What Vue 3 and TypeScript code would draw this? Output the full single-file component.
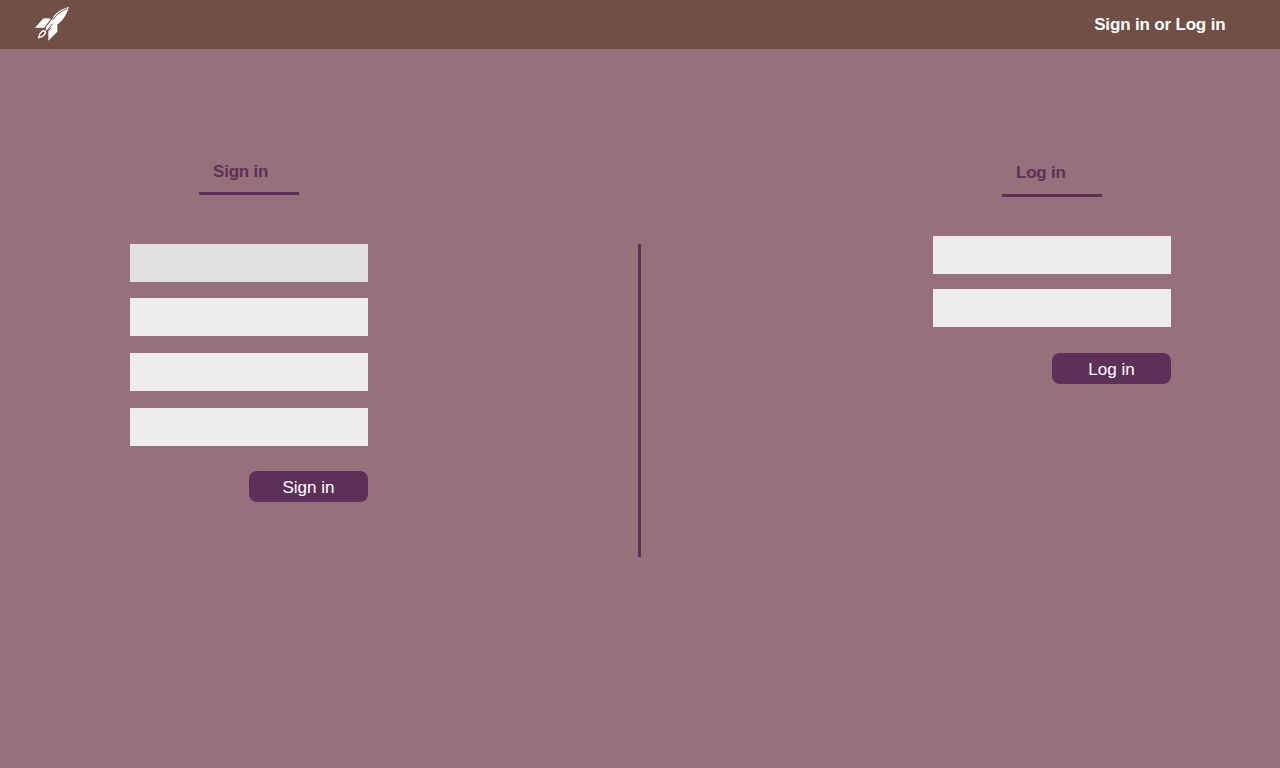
<script setup lang="ts">
import { ref } from 'vue'

const signIn = ref<string[]>(['', '', '', ''])
const logIn = ref<string[]>(['', ''])
</script>

<template>
  <div class="page">
    <header class="bar">
      <svg class="rocket" viewBox="0 0 150 156" aria-hidden="true">
        <path class="solid" d="M123 21C99 26 82 39 73 56L55 78L52 93L64 87L86 75C103 64 116 44 123 21Z" />
        <path class="solid" d="M21 83L44 58Q47 54 53 55L69 56L49 83Z" />
        <path class="solid" d="M61 122V94L80 74L88 75V93Q88 96 85 98Z" />
        <path class="cut" d="M117 26C99 32 84 45 74 60M70 58L54 79L51 90M74 71L58 90" />
        <path class="ring" d="M32 113C34 102 39 95 47 92L53 97C50 106 43 111 32 113Z" />
      </svg>
      <a class="account">Sign in or Log in</a>
    </header>
    <main class="forms">
      <form class="panel sign" @submit.prevent>
        <h2 class="title">Sign in</h2>
        <div class="fields">
          <input v-for="(_, i) in signIn" :key="i" v-model="signIn[i]" class="field" :class="{ active: i === 0 }" />
        </div>
        <button class="submit">Sign in</button>
      </form>
      <div class="divider"></div>
      <form class="panel log" @submit.prevent>
        <h2 class="title">Log in</h2>
        <div class="fields">
          <input v-for="(_, i) in logIn" :key="i" v-model="logIn[i]" class="field" />
        </div>
        <button class="submit">Log in</button>
      </form>
    </main>
  </div>
</template>

<style scoped>
.page {
  height: 768px;
  overflow: hidden;
  background: #96707a;
  font-family: "Liberation Sans", Arial, sans-serif;
  font-size: 17px;
}
.bar {
  height: 49px;
  box-sizing: border-box;
  padding: 0 54.6px 0 28px;
  display: flex;
  justify-content: space-between;
  background: #705046;
}
.rocket {
  width: 50px;
  height: 52px;
}
.solid {
  fill: #fff;
}
.cut {
  fill: none;
  stroke: #705046;
  stroke-width: 3;
}
.ring {
  fill: none;
  stroke: #fff;
  stroke-width: 4;
}
.account {
  color: #fff;
  font-weight: 700;
  line-height: 50px;
  letter-spacing: -0.17px;
}
.forms {
  display: flex;
  justify-content: space-between;
  align-items: flex-start;
  padding: 0 109px 0 130px;
}
.panel {
  width: 238px;
  display: flex;
  flex-direction: column;
}
.title {
  width: 100px;
  box-sizing: border-box;
  margin: 0;
  padding-left: 14px;
  align-self: center;
  border-bottom: 3px solid #5f3057;
  color: #5f3057;
  font-size: 17px;
  line-height: 20px;
  letter-spacing: -0.2px;
}
.sign .title {
  margin-top: 113px;
  height: 33px;
}
.log .title {
  margin-top: 114px;
  height: 34px;
}
.fields {
  display: flex;
  flex-direction: column;
}
.sign .fields {
  margin-top: 49px;
  gap: 17px;
}
.log .fields {
  margin-top: 39px;
  gap: 15px;
}
.field {
  width: 238px;
  height: 38px;
  box-sizing: border-box;
  padding: 0 10px;
  border: 0;
  border-radius: 0;
  outline: 0;
  background: #ededed;
  font: inherit;
}
.field.active {
  margin-bottom: -1px;
  background: #e1e1e1;
}
.submit {
  width: 119px;
  height: 31px;
  padding: 3px 0 0;
  align-self: flex-end;
  border: 0;
  border-radius: 8px;
  background: #5f3057;
  color: #fff;
  font: inherit;
}
.sign .submit {
  margin-top: 25px;
}
.log .submit {
  margin-top: 26px;
}
.divider {
  width: 3px;
  height: 313px;
  margin: 195px 0 0 -23px;
  background: #5f3057;
}
</style>
